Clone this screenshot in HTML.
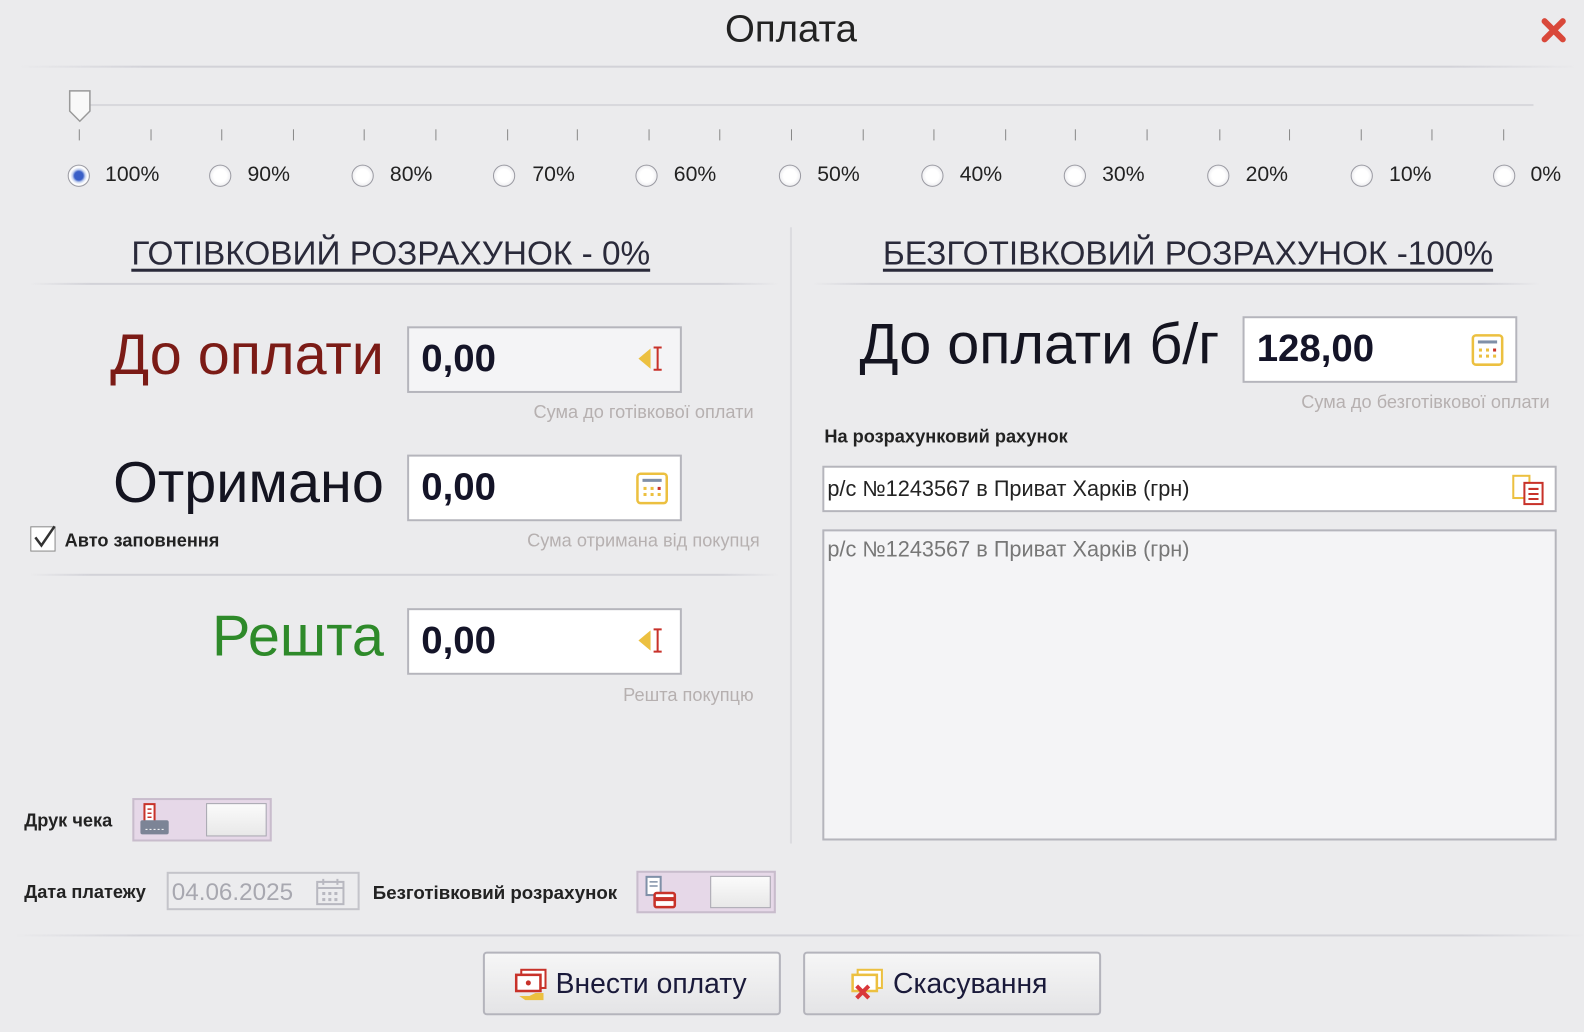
<!DOCTYPE html>
<html><head><meta charset="utf-8"><style>
*{margin:0;padding:0;box-sizing:border-box}
body{width:1584px;height:1032px;background:#ebebed;font-family:"Liberation Sans",sans-serif;position:relative;overflow:hidden;color:#1a1a2a}
#w{position:absolute;left:0;top:0;width:1568px;height:1022px;transform:scale(1.0102);transform-origin:0 0}
.a{position:absolute;white-space:nowrap}
.hl{position:absolute;height:2px;background:linear-gradient(90deg,rgba(210,210,215,0),#d2d2d8 8%,#d2d2d8 92%,rgba(210,210,215,0))}
.tick{position:absolute;top:128px;width:1px;height:11px;background:#888}
.rad{position:absolute;top:163px;width:22px;height:22px;border-radius:50%;border:1px solid #9a9aa2;background:radial-gradient(circle,#fff 45%,#dcdce2 100%)}
.rl{position:absolute;top:161px;font-size:21px;color:#222}
.box{position:absolute;background:#fff;border:2px solid #b5b5bc}
.num{position:absolute;left:12px;top:50%;transform:translateY(-50%);font-size:38px;font-weight:bold;color:#141428}
.hint{position:absolute;font-size:18px;color:#b6b0b0;text-align:right}
.big{position:absolute;font-size:57px;text-align:right}
.lab{position:absolute;font-size:18px;font-weight:bold;color:#222}
.tog{position:absolute;background:#e6d8e8;border:2px solid #c8bccc}
.tog .in{position:absolute;right:3px;top:3px;bottom:3px;width:60px;background:linear-gradient(#fbfbfb,#e8e8e8);border:1px solid #a8a8b0}
.btn{position:absolute;top:942px;height:63px;width:295px;border:2px solid #b4b4bc;border-radius:4px;background:linear-gradient(#f6f6f6,#e4e4e6);font-size:28px;color:#1a1a3a}
</style></head><body><div id="w">
<div class="a" style="left:0;width:1566px;top:8px;text-align:center;font-size:38px;color:#222">Оплата</div>
<svg class="a" style="left:1525px;top:17px" width="26" height="26" viewBox="0 0 26 26"><path d="M4 4L22 22M22 4L4 22" stroke="#d9483a" stroke-width="6" stroke-linecap="round"/></svg>
<div class="hl" style="left:20px;width:1540px;top:65px"></div>
<div class="a" style="left:78px;width:1440px;top:103px;height:2px;background:#d8d8dc"></div>
<svg class="a" style="left:67px;top:88px" width="24" height="34"><path d="M2 2h20v20l-10 10l-10-10z" fill="#f8f8f8" stroke="#999" stroke-width="1.5"/></svg>
<div class="tick" style="left:78px"></div><div class="tick" style="left:149px"></div><div class="tick" style="left:219px"></div><div class="tick" style="left:290px"></div><div class="tick" style="left:360px"></div><div class="tick" style="left:431px"></div><div class="tick" style="left:502px"></div><div class="tick" style="left:571px"></div><div class="tick" style="left:642px"></div><div class="tick" style="left:712px"></div><div class="tick" style="left:783px"></div><div class="tick" style="left:854px"></div><div class="tick" style="left:924px"></div><div class="tick" style="left:995px"></div><div class="tick" style="left:1064px"></div><div class="tick" style="left:1135px"></div><div class="tick" style="left:1207px"></div><div class="tick" style="left:1276px"></div><div class="tick" style="left:1347px"></div><div class="tick" style="left:1417px"></div><div class="tick" style="left:1488px"></div>
<div class="rad" style="left:67px;background:radial-gradient(circle,#3a5fc8 30%,#c8d4f0 45%,#fff 60%,#dcdce2 100%)"></div><div class="rl" style="left:104px">100%</div>
<div class="rad" style="left:207px"></div><div class="rl" style="left:245px">90%</div>
<div class="rad" style="left:348px"></div><div class="rl" style="left:386px">80%</div>
<div class="rad" style="left:488px"></div><div class="rl" style="left:527px">70%</div>
<div class="rad" style="left:629px"></div><div class="rl" style="left:667px">60%</div>
<div class="rad" style="left:771px"></div><div class="rl" style="left:809px">50%</div>
<div class="rad" style="left:912px"></div><div class="rl" style="left:950px">40%</div>
<div class="rad" style="left:1053px"></div><div class="rl" style="left:1091px">30%</div>
<div class="rad" style="left:1195px"></div><div class="rl" style="left:1233px">20%</div>
<div class="rad" style="left:1337px"></div><div class="rl" style="left:1375px">10%</div>
<div class="rad" style="left:1478px"></div><div class="rl" style="left:1515px">0%</div>

<div class="a" style="left:130px;top:232px;font-size:33px;color:#2a2a3a;text-decoration:underline;text-underline-offset:4px">ГОТІВКОВИЙ РОЗРАХУНОК - 0%</div>
<div class="a" style="left:874px;top:232px;font-size:33px;color:#2a2a3a;text-decoration:underline;text-underline-offset:4px">БЕЗГОТІВКОВИЙ РОЗРАХУНОК -100%</div>
<div class="hl" style="left:30px;width:740px;top:280px"></div>
<div class="hl" style="left:805px;width:720px;top:280px"></div>
<div class="a" style="left:782px;top:225px;width:2px;height:610px;background:#dcdce0"></div>

<div class="big" style="left:60px;width:320px;top:318px;color:#7b1b16">До оплати</div>
<div class="box" style="left:403px;top:323px;width:272px;height:66px;background:#f4f4f6"><div class="num">0,00</div>
<svg class="a" style="left:225px;top:16px" width="34" height="30"><path d="M2 14l12-10v20z" fill="#ecc040"/><path d="M17 3h8M21 3v22M17 25h8" stroke="#c8322a" stroke-width="2"/></svg></div>
<div class="hint" style="left:440px;width:306px;top:398px">Сума до готівкової оплати</div>

<div class="big" style="left:60px;width:320px;top:445px;color:#141420">Отримано</div>
<div class="box" style="left:403px;top:450px;width:272px;height:66px"><div class="num">0,00</div>
<svg class="a" style="left:224px;top:15px" width="34" height="34"><rect x="2" y="2" width="29" height="29" rx="3" fill="#fff" stroke="#ecc040" stroke-width="2.5"/><rect x="7" y="7" width="19" height="3" fill="#8090a8"/><g fill="#ecc040"><rect x="8" y="15" width="3" height="3"/><rect x="15" y="15" width="3" height="3"/><rect x="8" y="21" width="3" height="3"/><rect x="15" y="21" width="3" height="3"/><rect x="22" y="21" width="3" height="3"/></g><rect x="22" y="15" width="3" height="3" fill="#c8322a"/></svg></div>
<div class="hint" style="left:400px;width:352px;top:525px">Сума отримана від покупця</div>
<div class="a" style="left:30px;top:521px;width:25px;height:25px;border:1px solid #888;background:#fff"></div>
<svg class="a" style="left:30px;top:518px" width="28" height="28"><path d="M5 14l6 8l13-19" fill="none" stroke="#333" stroke-width="2.5"/></svg>
<div class="lab" style="left:64px;top:525px">Авто заповнення</div>
<div class="hl" style="left:30px;width:740px;top:568px"></div>

<div class="big" style="left:60px;width:320px;top:597px;color:#2e8a2a">Решта</div>
<div class="box" style="left:403px;top:602px;width:272px;height:66px"><div class="num">0,00</div>
<svg class="a" style="left:225px;top:16px" width="34" height="30"><path d="M2 14l12-10v20z" fill="#ecc040"/><path d="M17 3h8M21 3v22M17 25h8" stroke="#c8322a" stroke-width="2"/></svg></div>
<div class="hint" style="left:440px;width:306px;top:678px">Решта покупцю</div>

<div class="big" style="left:800px;width:407px;top:308px;color:#141420">До оплати б/г</div>
<div class="box" style="left:1230px;top:313px;width:272px;height:66px"><div class="num">128,00</div>
<svg class="a" style="left:224px;top:15px" width="34" height="34"><rect x="2" y="2" width="29" height="29" rx="3" fill="#fff" stroke="#ecc040" stroke-width="2.5"/><rect x="7" y="7" width="19" height="3" fill="#8090a8"/><g fill="#ecc040"><rect x="8" y="15" width="3" height="3"/><rect x="15" y="15" width="3" height="3"/><rect x="8" y="21" width="3" height="3"/><rect x="15" y="21" width="3" height="3"/><rect x="22" y="21" width="3" height="3"/></g><rect x="22" y="15" width="3" height="3" fill="#c8322a"/></svg></div>
<div class="hint" style="left:1180px;width:354px;top:388px">Сума до безготівкової оплати</div>
<div class="lab" style="left:816px;top:422px">На розрахунковий рахунок</div>
<div class="box" style="left:814px;top:461px;width:727px;height:46px"><div class="a" style="left:3px;top:9px;font-size:21.5px;color:#222">р/с №1243567 в Приват Харків (грн)</div>
<svg class="a" style="left:680px;top:6px" width="36" height="32"><rect x="2" y="2" width="16" height="22" fill="#fff" stroke="#ecc040" stroke-width="2"/><rect x="13" y="9" width="18" height="21" fill="#fff" stroke="#c8322a" stroke-width="2"/><path d="M17 15h10M17 20h10M17 25h10" stroke="#c8322a" stroke-width="2"/></svg></div>
<div class="box" style="left:814px;top:524px;width:727px;height:308px;background:#f4f4f6"><div class="a" style="left:3px;top:6px;font-size:21.5px;color:#777">р/с №1243567 в Приват Харків (грн)</div></div>

<div class="lab" style="left:24px;top:802px">Друк чека</div>
<div class="tog" style="left:131px;top:790px;width:138px;height:43px"><div class="in"></div>
<svg class="a" style="left:4px;top:2px" width="34" height="36"><rect x="6" y="2" width="10" height="18" fill="#fff" stroke="#c8322a" stroke-width="2"/><path d="M9 7h4M9 11h4M9 15h4" stroke="#c8322a" stroke-width="1.5"/><rect x="2" y="18" width="28" height="14" rx="2" fill="#7c8496"/><path d="M7 27h18" stroke="#fff" stroke-dasharray="2 2"/></svg></div>
<div class="lab" style="left:24px;top:873px">Дата платежу</div>
<div class="a" style="left:165px;top:863px;width:191px;height:38px;border:2px solid #c4c4ca;background:#ececee"><div class="a" style="left:3px;top:5px;font-size:24px;color:#a8a8b0">04.06.2025</div>
<svg class="a" style="left:145px;top:3px" width="32" height="30"><rect x="2" y="5" width="26" height="22" fill="none" stroke="#b8b8c0" stroke-width="2"/><path d="M8 2v6M22 2v6M2 11h26" stroke="#b8b8c0" stroke-width="2"/><g fill="#b8b8c0"><rect x="7" y="15" width="3" height="3"/><rect x="13" y="15" width="3" height="3"/><rect x="19" y="15" width="3" height="3"/><rect x="7" y="21" width="3" height="3"/><rect x="13" y="21" width="3" height="3"/><rect x="19" y="21" width="3" height="3"/></g></svg></div>
<div class="lab" style="left:369px;top:873px;font-size:18.5px">Безготівковий розрахунок</div>
<div class="tog" style="left:630px;top:862px;width:138px;height:42px"><div class="in"></div>
<svg class="a" style="left:4px;top:2px" width="36" height="36"><rect x="4" y="2" width="14" height="18" fill="#fff" stroke="#8090a8" stroke-width="2"/><path d="M7 7h8M7 11h8" stroke="#8090a8" stroke-width="1.5"/><rect x="12" y="18" width="20" height="14" rx="2" fill="#fff" stroke="#c8322a" stroke-width="2.5"/><rect x="12" y="22" width="20" height="4" fill="#c8322a"/></svg></div>
<div class="hl" style="left:15px;width:1555px;top:925px"></div>

<div class="btn" style="left:478px"><svg class="a" style="left:28px;top:14px" width="36" height="36"><rect x="8" y="2" width="24" height="18" fill="#fff" stroke="#c8322a" stroke-width="2"/><rect x="3" y="7" width="24" height="16" fill="#fff" stroke="#c8322a" stroke-width="2.5"/><circle cx="15" cy="15" r="2.5" fill="#c8322a"/><path d="M6 28h10l6-3h8v7H12z" fill="#ecc040"/></svg><div class="a" style="left:70px;top:14px">Внести оплату</div></div>
<div class="btn" style="left:795px"><svg class="a" style="left:44px;top:14px" width="36" height="36"><rect x="8" y="2" width="24" height="18" fill="#fff" stroke="#ecc040" stroke-width="2"/><rect x="3" y="7" width="24" height="16" fill="#fff" stroke="#ecc040" stroke-width="2.5"/><path d="M7 18l12 12M19 18L7 30" stroke="#d9383a" stroke-width="4"/></svg><div class="a" style="left:87px;top:14px">Скасування</div></div>
</div></body></html>
